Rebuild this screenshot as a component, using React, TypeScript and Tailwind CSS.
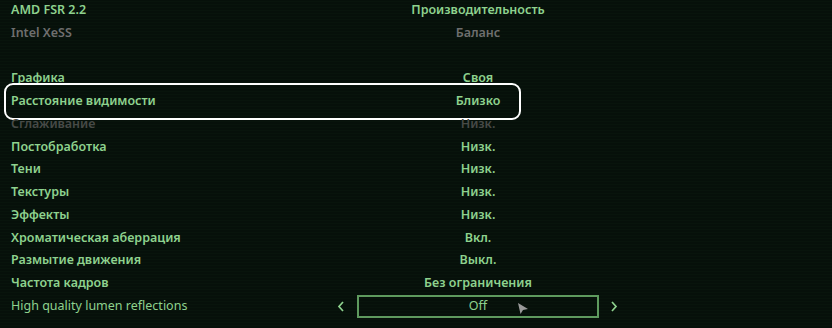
import React from "react";

type Row = { label: string; value: string; tone?: "green" | "grey" | "dim"; highlight?: boolean; blank?: boolean };

const rows: Row[] = [
  { label: "AMD FSR 2.2", value: "Производительность" },
  { label: "Intel XeSS", value: "Баланс", tone: "grey" },
  { label: "", value: "", blank: true },
  { label: "Графика", value: "Своя" },
  { label: "Расстояние видимости", value: "Близко", highlight: true },
  { label: "Сглаживание", value: "Низк.", tone: "dim" },
  { label: "Постобработка", value: "Низк." },
  { label: "Тени", value: "Низк." },
  { label: "Текстуры", value: "Низк." },
  { label: "Эффекты", value: "Низк." },
  { label: "Хроматическая аберрация", value: "Вкл." },
  { label: "Размытие движения", value: "Выкл." },
  { label: "Частота кадров", value: "Без ограничения" },
];

function toneClass(t?: Row["tone"]) {
  if (t === "grey") return "text-[#6e6e6e]";
  if (t === "dim") return "text-[#474a47]";
  return "text-[#8ed28e]";
}

export default function App() {
  return (
    <div
      className="w-[832px] h-[328px] overflow-hidden bg-[#06100a] bg-[repeating-linear-gradient(0deg,#06100a_0px,#06100a_2px,#08140c_2px,#08140c_3px)] text-[12.5px] font-semibold"
      style={{ fontFamily: '"Noto Sans", "Open Sans", sans-serif' }}
    >
      <div className="flex flex-col -mt-[1px]">
        {rows.map((r, i) => (
          <div key={i} className="relative flex items-center h-[22.78px]">
            {r.highlight && (
              <div className="absolute left-[4px] w-[517px] top-[-7px] bottom-[-7px] border-[2.5px] border-white rounded-[9px]" />
            )}
            <div className={`w-[357px] pl-[11px] whitespace-nowrap ${toneClass(r.tone)}`}>{r.label}</div>
            <div className={`w-[242px] text-center whitespace-nowrap ${toneClass(r.tone)}`}>{r.value}</div>
          </div>
        ))}
        <div className="flex items-center h-[22.78px]">
          <div className="w-[334px] pl-[11px] whitespace-nowrap font-normal text-[#8ed28e]">
            High quality lumen reflections
          </div>
          <div className="w-[23px] flex justify-start pl-[3px] text-[#8ed28e]">
            <svg width="8" height="11" viewBox="0 0 8 11" fill="none" stroke="currentColor" strokeWidth="1.7">
              <path d="M6 1 L2 5.5 L6 10" />
            </svg>
          </div>
          <div className="relative w-[242px] h-[23px] border-2 border-[#5e9a5e] flex items-center justify-center font-normal text-[#8ed28e]">
            Off
            <svg className="absolute left-[158px] top-[5px]" width="12" height="13" viewBox="0 0 12 13">
              <path d="M1 1 L11 7 L6 8 L3.5 12 Z" fill="#9a9a9a" />
            </svg>
          </div>
          <div className="w-[30px] flex justify-center text-[#8ed28e]">
            <svg width="8" height="11" viewBox="0 0 8 11" fill="none" stroke="currentColor" strokeWidth="1.7">
              <path d="M2 1 L6 5.5 L2 10" />
            </svg>
          </div>
        </div>
      </div>
    </div>
  );
}
